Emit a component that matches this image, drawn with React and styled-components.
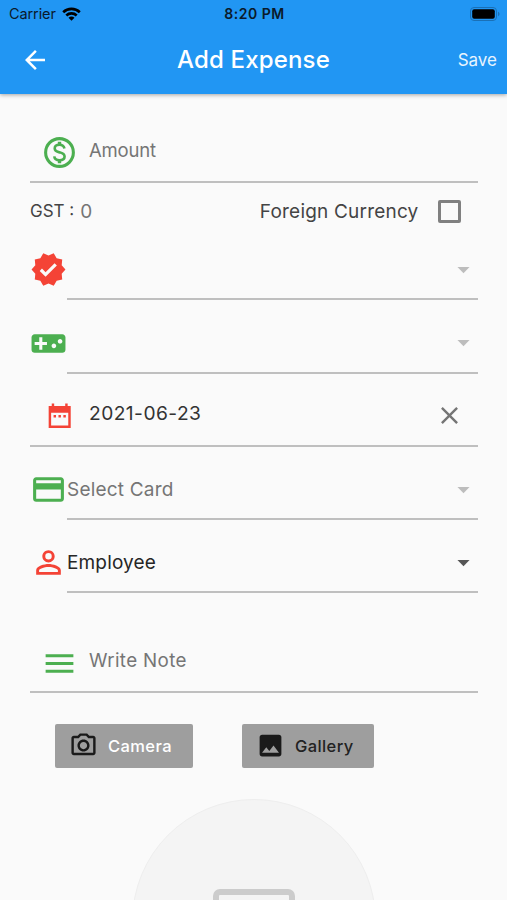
import React from "react"
import styled, { createGlobalStyle } from "styled-components"
import {
    MdArrowBack,
    MdVerified,
    MdVideogameAsset,
    MdClose,
    MdCreditCard,
    MdPersonOutline,
    MdMenu,
    MdOutlineCameraAlt,
    MdImage,
    MdArrowDropDown,
} from "react-icons/md"

const GlobalStyle = createGlobalStyle`
* {
box-sizing: border-box;
}
body {
margin: 0;
background-color: #fafafa;
font-family: Inter, "Liberation Sans", sans-serif;
}
svg {
display: block;
flex-shrink: 0;
}
`
const Container = styled.div`
width: 507px;
height: 900px;
overflow: hidden;
display: flex;
flex-direction: column;
background-color: #fafafa;
`
const Header = styled.header`
height: 94px;
flex-shrink: 0;
background-color: #2196f3;
box-shadow: 0 1px 4px rgba(0, 0, 0, 0.35);
`
const StatusBar = styled.div`
height: 27px;
padding: 0 7px 0 9px;
display: grid;
grid-template-columns: 1fr auto 1fr;
align-items: center;
color: #0a1a2b;
`
const Carrier = styled.div`
display: flex;
align-items: center;
gap: 6px;
font-size: 14.5px;
letter-spacing: -0.1px;
`
const Time = styled.div`
font-size: 14px;
font-weight: 600;
letter-spacing: 0.5px;
`
const Battery = styled.div`
justify-self: end;
`
const AppBar = styled.div`
height: 65px;
padding: 0 10px;
display: grid;
grid-template-columns: 1fr auto 1fr;
align-items: center;
color: #fff;
`
const BackButton = styled.div`
padding-left: 10px;
`
const Title = styled.h1`
margin: 0;
font-size: 24px;
font-weight: 500;
letter-spacing: 0.15px;
`
const Save = styled.button`
justify-self: end;
padding: 0;
border: none;
background: none;
color: #e8f4fe;
font-family: inherit;
font-size: 17px;
`
const Form = styled.main`
padding: 22px 29.5px 0 30px;
display: flex;
flex-direction: column;
`
const Field = styled.div`
height: ${props => props.$height}px;
padding: ${props => props.$top}px 14px 0 11px;
display: flex;
align-items: flex-start;
border-bottom: 2px solid #bfbfbf;
`
const FieldIcon = styled.div`
width: 37px;
height: 37px;
margin-right: 11px;
display: flex;
align-items: center;
justify-content: center;
color: ${props => props.$color};
`
const FieldText = styled.span`
flex: 1;
font-size: ${props => props.$size || 18.5}px;
line-height: 32px;
letter-spacing: ${props => props.$spacing || 0}px;
color: ${props => props.$filled ? "#333" : "#757575"};
`
const ClearButton = styled.div`
margin-top: 4px;
color: #757575;
`
const GstRow = styled.div`
height: 56px;
padding-right: 17px;
display: flex;
align-items: center;
color: #444;
`
const GstLabel = styled.span`
font-size: 17px;
white-space: pre;
`
const GstValue = styled.span`
flex: 1;
margin-left: 6px;
font-size: 19px;
color: #757575;
`
const CheckLabel = styled.span`
margin-right: 19px;
font-size: 19px;
letter-spacing: 0.2px;
`
const Checkbox = styled.div`
width: 23px;
height: 23px;
border: 3px solid #808080;
border-radius: 2px;
`
const SelectRow = styled.div`
height: ${props => props.$height || 73}px;
display: flex;
align-items: flex-end;
`
const SelectIcon = styled.div`
width: 37px;
height: 61px;
display: flex;
align-items: center;
justify-content: center;
color: ${props => props.$color};
`
const SelectBox = styled.div`
flex: 1;
height: 60px;
display: flex;
align-items: center;
justify-content: space-between;
border-bottom: 2px solid #bfbfbf;
font-size: 19px;
letter-spacing: ${props => props.$spacing || 0}px;
color: ${props => props.$filled ? "#262626" : "#757575"};

svg {
    color: ${props => props.$filled ? "#555" : "#bdbdbd"};
}
`
const Buttons = styled.div`
margin-top: 31px;
padding-left: 25px;
display: flex;
gap: 49px;
`
const Button = styled.button`
width: ${props => props.$width}px;
height: 44px;
padding: 0 0 1px 14px;
display: flex;
align-items: center;
gap: 10px;
border: none;
border-radius: 2px;
background-color: #9e9e9e;
color: ${props => props.$color};
font-family: inherit;
font-size: 16.5px;
font-weight: 500;
letter-spacing: 0.4px;

svg {
    color: #1a1a1a;
}
`
const Preview = styled.div`
width: 244px;
height: 244px;
margin: 31px auto 0;
padding-top: 89px;
flex-shrink: 0;
border: 1px solid #eeeeee;
border-radius: 50%;
background-color: #f4f4f4;
`
const PreviewFrame = styled.div`
width: 82px;
height: 66px;
margin: 0 auto;
border: 6px solid #cccccc;
border-radius: 7px;
`

function Wifi() {
    return (
        <svg width="19" height="14" viewBox="0 0 19 14" fill="none" stroke="#000" strokeWidth="2.6">
            <path d="M1.2 5.2C5.8 .7 13.2 .7 17.8 5.2" />
            <path d="M4.3 8.5C7.2 5.7 11.8 5.7 14.7 8.5" />
            <path d="M6.5 10.7C8.2 9.2 10.8 9.2 12.5 10.7L9.5 13.7Z" fill="#000" stroke="none" />
        </svg>
    )
}

function BatteryIcon() {
    return (
        <svg width="30" height="14" viewBox="0 0 30 14">
            <rect x="0.5" y="0.5" width="26" height="13" rx="3.5" fill="none" stroke="#1a70b6" />
            <rect x="2.2" y="2.2" width="22.6" height="9.6" rx="2" fill="#000" />
            <path d="M28 4.8C30 5.5 30 8.5 28 9.2Z" fill="#1a70b6" />
        </svg>
    )
}

function DollarIcon() {
    return (
        <svg width="37" height="37" viewBox="0 0 24 24" fill="none" stroke="currentColor">
            <circle cx="12" cy="12" r="9" strokeWidth="2" />
            <path d="M15.2 9.4C14.9 7.8 13.7 7 12 7C10.2 7 8.9 7.9 8.9 9.4C8.9 10.900 10.200 11.500 12 11.900C14 12.400 15.300 13.100 15.300 14.600C15.300 16.100 13.900 17 12 17C10.100 17 8.800 16.100 8.600 14.500" strokeWidth="1.7" />
            <path d="M12 5V7.300M12 16.700V19" strokeWidth="2.2" />
        </svg>
    )
}

function CalendarIcon() {
    return (
        <svg width="29.4" height="29.4" viewBox="0 0 24 24" fill="currentColor">
            <path fillRule="evenodd" d="M3 4H5.5V2H7.5V4H16.5V2H18.5V4H21V22H3ZM5 9.5V20H19V9.5Z" />
            <path d="M7 11.5H9V13.5H7ZM11 11.5H13V13.5H11ZM15 11.5H17V13.5H15Z" />
        </svg>
    )
}

function Select({ icon, color, text, filled, height, spacing }) {
    return (
        <SelectRow $height={height}>
            <SelectIcon $color={color}>{icon}</SelectIcon>
            <SelectBox $filled={filled} $spacing={spacing}>
                <span>{text}</span>
                <MdArrowDropDown size={29} />
            </SelectBox>
        </SelectRow>
    )
}

export default function App() {
    return (
        <Container>
            <GlobalStyle />
            <Header>
                <StatusBar>
                    <Carrier>Carrier <Wifi /></Carrier>
                    <Time>8:20 PM</Time>
                    <Battery><BatteryIcon /></Battery>
                </StatusBar>
                <AppBar>
                    <BackButton><MdArrowBack size={30} /></BackButton>
                    <Title>Add Expense</Title>
                    <Save>Save</Save>
                </AppBar>
            </Header>
            <Form>
                <Field $height={67} $top={18}>
                    <FieldIcon $color="#4caf50"><DollarIcon /></FieldIcon>
                    <FieldText $spacing={-0.2}>Amount</FieldText>
                </Field>
                <GstRow>
                    <GstLabel>GST :</GstLabel>
                    <GstValue>0</GstValue>
                    <CheckLabel>Foreign Currency</CheckLabel>
                    <Checkbox />
                </GstRow>
                <Select icon={<MdVerified size={37} />} color="#f44336" height={61} />
                <Select icon={<MdVideogameAsset size={37} />} color="#4caf50" height={73.5} />
                <Field $height={73.5} $top={23.5}>
                    <FieldIcon $color="#f44336"><CalendarIcon /></FieldIcon>
                    <FieldText $filled $size={19.2} $spacing={0.45}>2021-06-23</FieldText>
                    <ClearButton><MdClose size={29} /></ClearButton>
                </Field>
                <Select icon={<MdCreditCard size={37} />} color="#4caf50" text="Select Card" spacing={0.2} />
                <Select icon={<MdPersonOutline size={37} />} color="#f44336" text="Employee" spacing={0.15} filled />
                <Field $height={100} $top={51.5}>
                    <FieldIcon $color="#4caf50"><MdMenu size={37} /></FieldIcon>
                    <FieldText $size={18.8} $spacing={0.35}>Write Note</FieldText>
                </Field>
                <Buttons>
                    <Button $width={138} $color="#fff"><MdOutlineCameraAlt size={29} />Camera</Button>
                    <Button $width={132} $color="#222"><MdImage size={29} />Gallery</Button>
                </Buttons>
                <Preview>
                    <PreviewFrame />
                </Preview>
            </Form>
        </Container>
    )
}
